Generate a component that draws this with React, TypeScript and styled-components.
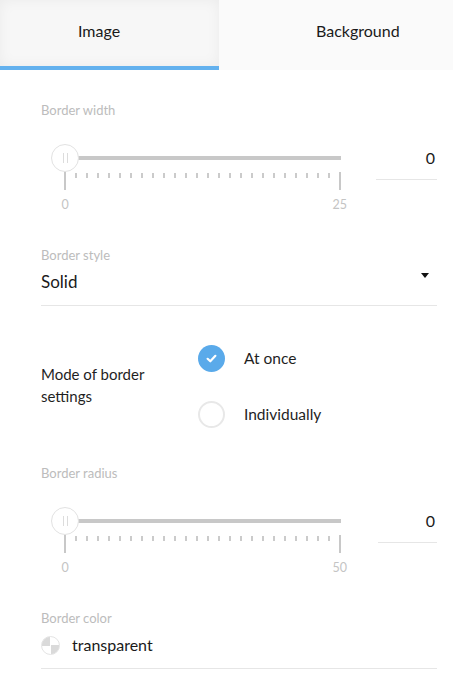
import React, { useState } from "react";
import styled, { createGlobalStyle } from "styled-components";

const GlobalStyle = createGlobalStyle`
  html, body {
    margin: 0;
    padding: 0;
    background: #ffffff;
  }
  body {
    font-family: Lato, "Noto Sans", sans-serif;
    color: #1f1f1f;
  }
  * {
    box-sizing: border-box;
  }
`;

const Page = styled.div`
  width: 453px;
  min-height: 675px;
  background: #fff;
`;

const Tabs = styled.div`
  display: flex;
  height: 70px;
`;

const Tab = styled.div<{ $active?: boolean; $width: number; $inset: number }>`
  width: ${(p) => p.$width}px;
  display: flex;
  align-items: center;
  padding: 0 0 6px ${(p) => p.$inset}px;
  font-size: 16px;
  color: #1a1a1a;
  background: ${(p) => (p.$active ? "#f7f7f7" : "#fafafa")};
  box-shadow: ${(p) =>
    p.$active ? "inset 0 0 14px rgba(0, 0, 0, 0.05)" : "none"};
  border-bottom: 4px solid ${(p) => (p.$active ? "#63b1ee" : "#fafafa")};
`;

const Content = styled.div`
  padding: 0 16px 0 41px;
`;

const Section = styled.div<{ $top: number }>`
  margin-top: ${(p) => p.$top}px;
`;

const Label = styled.div`
  font-size: 13px;
  line-height: 16px;
  color: #bcbcbc;
`;

const SliderRow = styled.div<{ $top: number }>`
  display: flex;
  justify-content: space-between;
  align-items: flex-start;
  margin-top: ${(p) => p.$top}px;
`;

const Slider = styled.div`
  position: relative;
  width: 290px;
  margin-left: 10px;
  padding-top: 28px;
`;

const Track = styled.div`
  position: absolute;
  left: 26px;
  right: 0;
  top: 12px;
  height: 4px;
  background: #c8c8c8;
`;

const Thumb = styled.div`
  position: absolute;
  left: 0;
  top: 0;
  width: 28px;
  height: 28px;
  border-radius: 50%;
  border: 1px solid #e2e2e2;
  background: #fff;
  display: flex;
  align-items: center;
  justify-content: center;
  gap: 3px;

  &::before,
  &::after {
    content: "";
    width: 1px;
    height: 10px;
    background: #dcdcdc;
  }
`;

const Ticks = styled.div`
  display: flex;
  justify-content: space-between;
  align-items: flex-start;
  margin-left: 13px;
  height: 18px;
`;

const Tick = styled.div<{ $big?: boolean }>`
  width: 2px;
  height: ${(p) => (p.$big ? 18 : 5)}px;
  background: ${(p) => (p.$big ? "#c8c8c8" : "#cbcbcb")};
  margin-top: ${(p) => (p.$big ? 0 : 1)}px;
`;

const Scale = styled.div`
  display: flex;
  justify-content: space-between;
  margin: 8px -6px 0 7px;
  font-size: 12.5px;
  line-height: 14px;
  color: #c4c4c4;
`;

const ScaleValue = styled.span`
  min-width: 14px;
  text-align: center;
`;

const ValueInput = styled.div<{ $width: number }>`
  width: ${(p) => p.$width}px;
  height: 36px;
  line-height: 28px;
  padding: 0 2px 8px 0;
  text-align: right;
  font-size: 16px;
  color: #1a1a1a;
  border-bottom: 1px solid #e6e6e6;
`;

const Select = styled.div`
  display: flex;
  justify-content: space-between;
  align-items: flex-start;
  margin-top: 4px;
  height: 39px;
  padding-top: 4px;
  border-bottom: 1px solid #e6e6e6;
`;

const SelectValue = styled.span`
  font-size: 17px;
  line-height: 22px;
  color: #1a1a1a;
`;

const Caret = styled.span`
  width: 0;
  height: 0;
  margin: 2px 8px 0 0;
  border-left: 4.5px solid transparent;
  border-right: 4.5px solid transparent;
  border-top: 5px solid #111;
`;

const ModeBlock = styled.div`
  display: flex;
  align-items: center;
  margin-top: 39px;
`;

const ModeLabel = styled.div`
  width: 157px;
  font-size: 15px;
  line-height: 22px;
  color: #1f1f1f;
  margin-top: -3px;
`;

const RadioGroup = styled.div`
  display: flex;
  flex-direction: column;
  gap: 29px;
`;

const RadioItem = styled.label`
  display: flex;
  align-items: center;
  gap: 19px;
  font-size: 15.5px;
  line-height: 20px;
  color: #1f1f1f;
  cursor: pointer;
`;

const RadioText = styled.span`
  margin-top: -2px;
`;

const RadioCircle = styled.span<{ $checked: boolean }>`
  width: 27px;
  height: 27px;
  border-radius: 50%;
  display: flex;
  align-items: center;
  justify-content: center;
  background: ${(p) => (p.$checked ? "#5aaaea" : "#fff")};
  border: ${(p) => (p.$checked ? "none" : "2px solid #e8e8e8")};
`;

const ColorRow = styled.div`
  display: flex;
  align-items: center;
  gap: 12px;
  margin-top: 4px;
  height: 39px;
  padding-bottom: 8px;
  border-bottom: 1px solid #e6e6e6;
`;

const Swatch = styled.span`
  width: 19px;
  height: 19px;
  border-radius: 50%;
  border: 1px solid #e4e4e4;
  background: conic-gradient(
    #ffffff 0 25%,
    #dadada 25% 50%,
    #ffffff 50% 75%,
    #dadada 75% 100%
  );
`;

const ColorText = styled.span`
  font-size: 16px;
  line-height: 30px;
  color: #1a1a1a;
`;

const RangeSlider = ({ max, value, inputWidth }: { max: number; value: number; inputWidth: number }) => (
  <SliderRow $top={26}>
    <Slider>
      <Track />
      <Thumb />
      <Ticks>
        {Array.from({ length: 26 }).map((_, i) => (
          <Tick key={i} $big={i === 0 || i === 25} />
        ))}
      </Ticks>
      <Scale>
        <ScaleValue>0</ScaleValue>
        <ScaleValue>{max}</ScaleValue>
      </Scale>
    </Slider>
    <ValueInput $width={inputWidth}>{value}</ValueInput>
  </SliderRow>
);

const Check = () => (
  <svg width="13" height="13" viewBox="0 0 13 13">
    <path
      d="M2.6 6.8 L5.3 9.3 L10.4 3.8"
      fill="none"
      stroke="#fff"
      strokeWidth="2.2"
      strokeLinecap="round"
      strokeLinejoin="round"
    />
  </svg>
);

export default function App() {
  const [mode, setMode] = useState("once");

  return (
    <Page>
      <GlobalStyle />
      <Tabs>
        <Tab $active $width={219} $inset={78}>Image</Tab>
        <Tab $width={234} $inset={97}>Background</Tab>
      </Tabs>
      <Content>
        <Section $top={32}>
          <Label>Border width</Label>
          <RangeSlider max={25} value={0} inputWidth={61} />
        </Section>

        <Section $top={35}>
          <Label>Border style</Label>
          <Select>
            <SelectValue>Solid</SelectValue>
            <Caret />
          </Select>
        </Section>

        <ModeBlock>
          <ModeLabel>
            Mode of border
            <br />
            settings
          </ModeLabel>
          <RadioGroup>
            <RadioItem onClick={() => setMode("once")}>
              <RadioCircle $checked={mode === "once"}>
                {mode === "once" && <Check />}
              </RadioCircle>
              <RadioText>At once</RadioText>
            </RadioItem>
            <RadioItem onClick={() => setMode("individual")}>
              <RadioCircle $checked={mode === "individual"}>
                {mode === "individual" && <Check />}
              </RadioCircle>
              <RadioText>Individually</RadioText>
            </RadioItem>
          </RadioGroup>
        </ModeBlock>

        <Section $top={37}>
          <Label>Border radius</Label>
          <RangeSlider max={50} value={0} inputWidth={59} />
        </Section>

        <Section $top={35}>
          <Label>Border color</Label>
          <ColorRow>
            <Swatch />
            <ColorText>transparent</ColorText>
          </ColorRow>
        </Section>
      </Content>
    </Page>
  );
}
